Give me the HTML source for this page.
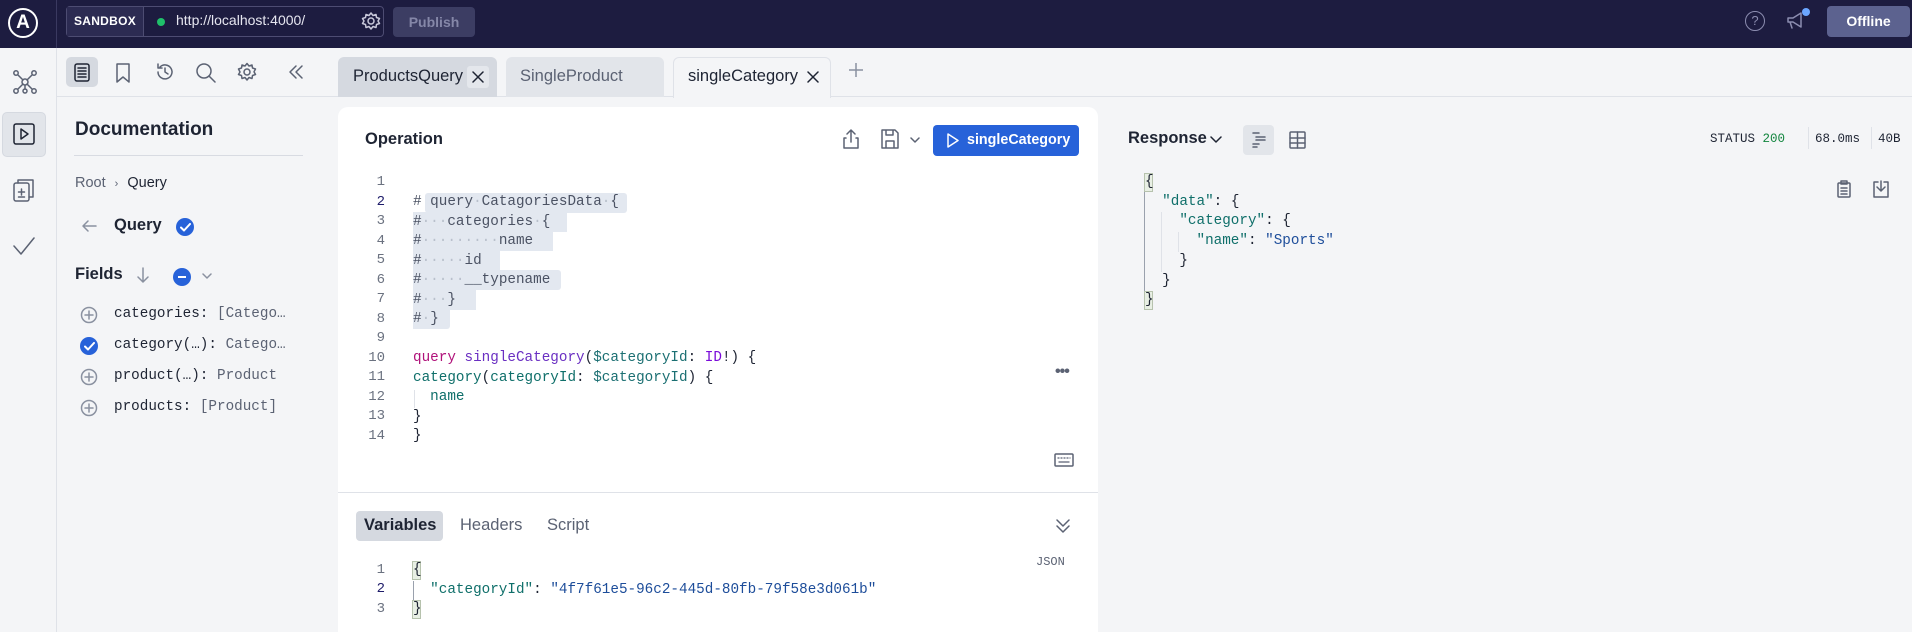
<!DOCTYPE html>
<html><head><meta charset="utf-8"><style>
*{box-sizing:border-box;margin:0;padding:0}
body{width:1912px;height:632px;overflow:hidden;background:#f4f5f7;font-family:"Liberation Sans",sans-serif;color:#1e2433;position:relative}
.a{position:absolute}
.mono{font-family:"Liberation Mono",monospace;font-size:14.3px;white-space:pre}
.ln{position:absolute;width:30px;text-align:right;color:#6b7280;font-family:"Liberation Mono",monospace;font-size:14px}
svg{position:absolute;fill:none;stroke:#5b6273;stroke-width:1.5;stroke-linecap:round;stroke-linejoin:round}
.hl{position:absolute;background:#e3e8f0;height:20px}
</style></head><body>
<!-- top bar -->
<div class="a" style="left:0;top:0;width:1912px;height:48px;background:#1d1c40"></div>
<div class="a" style="left:56px;top:0;width:1px;height:48px;background:#3a3960"></div>
<div class="a" style="left:8px;top:8px;width:30px;height:30px;border:2px solid #fff;border-radius:50%;color:#fff;font-weight:bold;font-size:19px;text-align:center;line-height:26px">A</div>
<div class="a" style="left:66px;top:6px;width:318px;height:31px;border:1px solid #4d4c72;border-radius:4px;background:#1d1c40"></div>
<div class="a" style="left:67px;top:7px;width:77px;height:29px;background:#2c2b52;border-right:1px solid #4d4c72;color:#fff;font-size:12px;font-weight:bold;line-height:29px;text-align:center;letter-spacing:.3px">SANDBOX</div>
<div class="a" style="left:157px;top:18px;width:8px;height:8px;border-radius:50%;background:#1fc06a"></div>
<div class="a" style="left:176px;top:12px;color:#e6e6f0;font-size:14px">http://localhost:4000/</div>
<svg style="left:361px;top:11px" width="20" height="20" viewBox="0 0 20 20"><circle cx="10" cy="10" r="3" stroke="#c8c8da"/><path d="M10 2l2 2.5 3-1 .5 3 3 1-1.5 2.5 1.5 2.5-3 1-.5 3-3-1L10 18l-2-2.5-3 1-.5-3-3-1L3 10 1.5 7.5l3-1 .5-3 3 1z" stroke="#c8c8da"/></svg>
<div class="a" style="left:393px;top:7px;width:82px;height:30px;background:#3c3d63;border-radius:4px;color:#8587a8;font-size:14px;font-weight:bold;text-align:center;line-height:30px">Publish</div>
<div class="a" style="left:1745px;top:11px;width:20px;height:20px;border:1.5px solid #8c8db0;border-radius:50%;color:#8c8db0;font-size:13px;text-align:center;line-height:18px">?</div>
<svg style="left:1785px;top:10px" width="24" height="22" viewBox="0 0 24 22"><path d="M3 8h5l8-5v14l-8-5H3zM5 12l2 6" stroke="#8c8db0"/></svg>
<div class="a" style="left:1802px;top:8px;width:8px;height:8px;border-radius:50%;background:#6ba6ff"></div>
<div class="a" style="left:1827px;top:6px;width:83px;height:31px;background:#5c628f;border-radius:4px;color:#fff;font-size:14px;font-weight:bold;text-align:center;line-height:31px">Offline</div>

<!-- left rail -->
<div class="a" style="left:56px;top:48px;width:1px;height:584px;background:#dfe2e8"></div>
<svg style="left:12px;top:69px" width="26" height="26" viewBox="0 0 26 26"><circle cx="13" cy="13" r="3"/><circle cx="4" cy="4" r="2.2"/><circle cx="22" cy="4" r="2.2"/><circle cx="4" cy="22" r="2.2"/><circle cx="22" cy="22" r="2.2"/><circle cx="13" cy="22" r="2"/><path d="M6 6l5 5M20 6l-5 5M6 20l5-5M20 20l-5-5M13 16v4"/></svg>
<div class="a" style="left:2px;top:112px;width:44px;height:45px;background:#e2e5ea;border-radius:5px;border:1px solid #d5d9e0"></div>
<svg style="left:13px;top:123px" width="22" height="22" viewBox="0 0 22 22"><rect x="1" y="1" width="20" height="20" rx="2" stroke="#1e2433"/><path d="M8 6l7 5-7 5z" stroke="#1e2433"/></svg>
<svg style="left:13px;top:178px" width="22" height="24" viewBox="0 0 22 24"><rect x="1" y="5" width="15" height="18" rx="2"/><path d="M5 5V2h15v17h-4M8.5 11v6M5.5 14h6M5.5 19h6"/></svg>
<svg style="left:12px;top:236px" width="24" height="20" viewBox="0 0 24 20"><path d="M2 10l7 8L22 2"/></svg>

<!-- doc sidebar -->
<div class="a" style="left:57px;top:96px;width:281px;height:1px;background:#dfe2e8"></div>
<div class="a" style="left:66px;top:57px;width:32px;height:30px;background:#d5d9e0;border-radius:5px"></div>
<svg style="left:73px;top:63px" width="18" height="19" viewBox="0 0 18 19"><rect x="2" y="1" width="14" height="17" rx="2" stroke="#1e2433"/><path d="M5 5h8M5 8h8M5 11h8M5 14h8" stroke="#1e2433"/></svg>
<svg style="left:115px;top:63px" width="16" height="20" viewBox="0 0 16 20"><path d="M2 1h12v18l-6-5-6 5z"/></svg>
<svg style="left:155px;top:62px" width="20" height="20" viewBox="0 0 20 20"><path d="M3 10a7 7 0 1 0 2-5M3 2v4h4M10 6v4l3 2"/></svg>
<svg style="left:195px;top:62px" width="21" height="21" viewBox="0 0 21 21"><circle cx="9" cy="9" r="7"/><path d="M14 14l6 6"/></svg>
<svg style="left:237px;top:62px" width="20" height="20" viewBox="0 0 20 20"><circle cx="10" cy="10" r="3"/><path d="M10 1.5l2 2.5 3-1 .5 3 3 1-1.5 2.8 1.5 2.7-3 1-.5 3-3-1-2 2.5-2-2.5-3 1-.5-3-3-1L3 10 1.5 7l3-1 .5-3 3 1z"/></svg>
<svg style="left:288px;top:64px" width="16" height="16" viewBox="0 0 16 16"><path d="M8 2L2 8l6 6M14 2L8 8l6 6"/></svg>

<div class="a" style="left:75px;top:119px;font-size:19px;font-weight:bold">Documentation</div>
<div class="a" style="left:74px;top:155px;width:229px;height:1px;background:#d8dbe2"></div>
<div class="a" style="left:75px;top:175px;font-size:14.5px;color:#5b6273">Root <span style="font-size:11px;margin:0 5px">›</span> <span style="color:#1e2433">Query</span></div>
<svg style="left:81px;top:218px" width="16" height="16" viewBox="0 0 16 16"><path d="M15 8H2M7 3L2 8l5 5" stroke="#8a91a0"/></svg>
<div class="a" style="left:114px;top:216px;font-size:16.5px;font-weight:bold">Query</div>
<div class="a" style="left:176px;top:218px;width:18px;height:18px;border-radius:50%;background:#2762d9"></div>
<svg style="left:180px;top:223px" width="11" height="9" viewBox="0 0 11 9"><path d="M1 4.5l3 3L10 1" stroke="#fff" stroke-width="2"/></svg>
<div class="a" style="left:75px;top:265px;font-size:16.5px;font-weight:bold">Fields</div>
<svg style="left:136px;top:267px" width="14" height="16" viewBox="0 0 14 16"><path d="M7 1v14M2 10l5 5 5-5" stroke="#8a91a0"/></svg>
<div class="a" style="left:173px;top:268px;width:18px;height:18px;border-radius:50%;background:#2762d9"></div>
<div class="a" style="left:178px;top:276px;width:8px;height:2px;background:#fff"></div>
<svg style="left:202px;top:273px" width="10" height="7" viewBox="0 0 10 7"><path d="M1 1l4 4 4-4" stroke="#8a91a0"/></svg>

<svg style="left:80px;top:306px" width="18" height="18" viewBox="0 0 18 18"><circle cx="9" cy="9" r="7.5" stroke="#8a91a0"/><path d="M9 5v8M5 9h8" stroke="#8a91a0"/></svg>
<div class="a mono" style="left:114px;top:306px;font-size:14.3px">categories<span>:</span> <span style="color:#5b6273">[Catego…</span></div>
<div class="a" style="left:80px;top:337px;width:18px;height:18px;border-radius:50%;background:#2762d9"></div>
<svg style="left:84px;top:342px" width="11" height="9" viewBox="0 0 11 9"><path d="M1 4.5l3 3L10 1" stroke="#fff" stroke-width="2"/></svg>
<div class="a mono" style="left:114px;top:337px">category(…)<span>:</span> <span style="color:#5b6273">Catego…</span></div>
<svg style="left:80px;top:368px" width="18" height="18" viewBox="0 0 18 18"><circle cx="9" cy="9" r="7.5" stroke="#8a91a0"/><path d="M9 5v8M5 9h8" stroke="#8a91a0"/></svg>
<div class="a mono" style="left:114px;top:368px">product(…)<span>:</span> <span style="color:#5b6273">Product</span></div>
<svg style="left:80px;top:399px" width="18" height="18" viewBox="0 0 18 18"><circle cx="9" cy="9" r="7.5" stroke="#8a91a0"/><path d="M9 5v8M5 9h8" stroke="#8a91a0"/></svg>
<div class="a mono" style="left:114px;top:399px">products<span>:</span> <span style="color:#5b6273">[Product]</span></div>

<!-- tabs -->
<div class="a" style="left:338px;top:96px;width:1574px;height:1px;background:#dfe2e8"></div>
<div class="a" style="left:338px;top:57px;width:159px;height:40px;background:#d5d9e0;border-radius:6px 6px 0 0"></div>
<div class="a" style="left:353px;top:67px;font-size:16.5px;color:#1e2433">ProductsQuery</div>
<div class="a" style="left:467px;top:66px;width:22px;height:22px;background:#e4e7ec;border-radius:3px"></div>
<svg style="left:472px;top:71px" width="12" height="12" viewBox="0 0 12 12"><path d="M1 1l10 10M11 1L1 11" stroke="#1e2433"/></svg>
<div class="a" style="left:506px;top:57px;width:158px;height:40px;background:#e2e5ea;border-radius:6px 6px 0 0"></div>
<div class="a" style="left:520px;top:67px;font-size:16.5px;color:#5b6273">SingleProduct</div>
<div class="a" style="left:673px;top:57px;width:158px;height:41px;background:#f4f5f7;border:1px solid #dfe2e8;border-bottom:none;border-radius:6px 6px 0 0"></div>
<div class="a" style="left:688px;top:67px;font-size:16.5px;color:#1e2433">singleCategory</div>
<svg style="left:807px;top:71px" width="12" height="12" viewBox="0 0 12 12"><path d="M1 1l10 10M11 1L1 11" stroke="#1e2433"/></svg>
<svg style="left:849px;top:63px" width="14" height="14" viewBox="0 0 14 14"><path d="M7 0v14M0 7h14" stroke="#8a91a0"/></svg>

<!-- operation panel -->
<div class="a" style="left:338px;top:107px;width:760px;height:525px;background:#fff;border-radius:10px 10px 0 0"></div>
<div class="a" style="left:365px;top:130px;font-size:16.5px;font-weight:bold">Operation</div>
<svg style="left:843px;top:129px" width="16" height="20" viewBox="0 0 16 20"><path d="M8 13V1M4 5l4-4 4 4M3 9H1v10h14V9h-2"/></svg>
<svg style="left:881px;top:129px" width="18" height="20" viewBox="0 0 18 20"><path d="M1 1h13l3 3v15H1zM5 1v5h7V1M5 19v-7h8v7"/></svg>
<svg style="left:910px;top:137px" width="10" height="7" viewBox="0 0 10 7"><path d="M1 1l4 4 4-4"/></svg>
<div class="a" style="left:933px;top:125px;width:146px;height:31px;background:#2762d9;border-radius:4px"></div>
<svg style="left:946px;top:133px" width="14" height="15" viewBox="0 0 14 15"><path d="M2 1l10 6.5L2 14z" stroke="#fff"/></svg>
<div class="a" style="left:967px;top:132px;color:#fff;font-size:14.3px;font-weight:bold">singleCategory</div>

<div class="hl" style="left:425px;top:193px;width:202px;border-radius:3px"></div>
<div class="hl" style="left:413px;top:212px;width:154px"></div>
<div class="hl" style="left:413px;top:231px;width:140px"></div>
<div class="hl" style="left:413px;top:251px;width:87px"></div>
<div class="hl" style="left:413px;top:270px;width:148px;border-radius:0 3px 3px 0"></div>
<div class="hl" style="left:413px;top:290px;width:63px"></div>
<div class="hl" style="left:413px;top:309px;width:37px;border-radius:0 0 3px 0"></div>

<div class="ln" style="left:355px;top:174px">1</div>
<div class="ln" style="left:355px;top:194px;color:#1e1c6a">2</div>
<div class="ln" style="left:355px;top:213px">3</div>
<div class="ln" style="left:355px;top:233px">4</div>
<div class="ln" style="left:355px;top:252px">5</div>
<div class="ln" style="left:355px;top:272px">6</div>
<div class="ln" style="left:355px;top:291px">7</div>
<div class="ln" style="left:355px;top:311px">8</div>
<div class="ln" style="left:355px;top:330px">9</div>
<div class="ln" style="left:355px;top:350px">10</div>
<div class="ln" style="left:355px;top:369px">11</div>
<div class="ln" style="left:355px;top:389px">12</div>
<div class="ln" style="left:355px;top:408px">13</div>
<div class="ln" style="left:355px;top:428px">14</div>

<div class="a mono" style="left:413px;top:193px;color:#4b5263;line-height:19.5px"># query<span style="color:#b9c0cc">·</span>CatagoriesData<span style="color:#b9c0cc">·</span>{
#<span style="color:#b9c0cc">···</span>categories<span style="color:#b9c0cc">·</span>{
#<span style="color:#b9c0cc">·········</span>name
#<span style="color:#b9c0cc">·····</span>id
#<span style="color:#b9c0cc">·····</span>__typename
#<span style="color:#b9c0cc">···</span>}
#<span style="color:#b9c0cc">·</span>}
</div>
<div class="a mono" style="left:413px;top:349px;line-height:19.5px;color:#1e2433"><span style="color:#b0127a">query</span> <span style="color:#6a2fc2">singleCategory</span>(<span style="color:#1b6f72">$categoryId</span>: <span style="color:#7a0bd9">ID</span>!) {
<span style="color:#0f6f6a">category</span>(<span style="color:#0f6f6a">categoryId</span>: <span style="color:#1b6f72">$categoryId</span>) {
  <span style="color:#0f6f6a">name</span>
}
}</div>
<div class="a" style="left:414px;top:390px;width:1px;height:18px;background:#dfe2e8"></div>
<div class="a" style="left:1055px;top:363px;color:#5b6273;font-size:16px;letter-spacing:-1px;font-weight:bold">•••</div>
<svg style="left:1054px;top:453px" width="20" height="14" viewBox="0 0 20 14"><rect x="1" y="1" width="18" height="12" rx="1"/><path d="M4 5h1M7 5h1M10 5h1M13 5h1M16 5h0M5 9h10" stroke-width="1.3"/></svg>

<div class="a" style="left:338px;top:492px;width:760px;height:1px;background:#dfe2e8"></div>
<div class="a" style="left:356px;top:511px;width:87px;height:30px;background:#d5d9e0;border-radius:4px"></div>
<div class="a" style="left:364px;top:516px;font-size:16.5px;font-weight:bold">Variables</div>
<div class="a" style="left:460px;top:516px;font-size:16.5px;color:#5b6273">Headers</div>
<div class="a" style="left:547px;top:516px;font-size:16.5px;color:#5b6273">Script</div>
<svg style="left:1056px;top:518px" width="14" height="16" viewBox="0 0 14 16"><path d="M1 2l6 6 6-6M1 8l6 6 6-6"/></svg>
<div class="a" style="left:1036px;top:555px;font-family:'Liberation Mono',monospace;font-size:12px;color:#5b6273">JSON</div>
<div class="ln" style="left:355px;top:562px">1</div>
<div class="ln" style="left:355px;top:581px;color:#1e1c6a">2</div>
<div class="ln" style="left:355px;top:601px">3</div>
<div class="a" style="left:412px;top:561px;width:9px;height:19px;background:#e8efe4;border:1px solid #b6c2ad"></div>
<div class="a" style="left:412px;top:600px;width:9px;height:19px;background:#e8efe4;border:1px solid #b6c2ad"></div>
<div class="a" style="left:413px;top:581px;width:1px;height:19px;background:#9aa1ad"></div>
<div class="a mono" style="left:413px;top:561px;line-height:19.5px;color:#1e2433">{
  <span style="color:#0f6f6a">"categoryId"</span>: <span style="color:#1d4d9a">"4f7f61e5-96c2-445d-80fb-79f58e3d061b"</span>
}</div>

<!-- response -->
<div class="a" style="left:1128px;top:129px;font-size:16.5px;font-weight:bold">Response</div>
<svg style="left:1210px;top:136px" width="12" height="8" viewBox="0 0 12 8"><path d="M1 1l5 5 5-5" stroke="#1e2433"/></svg>
<div class="a" style="left:1243px;top:125px;width:31px;height:30px;background:#e2e5ea;border-radius:4px"></div>
<svg style="left:1251px;top:131px" width="16" height="17" viewBox="0 0 16 17"><path d="M2 2h6M5 6h9M5 9h9M2 13h6M2 16h4"/></svg>
<svg style="left:1289px;top:131px" width="17" height="18" viewBox="0 0 17 18"><rect x="1" y="1" width="15" height="16" rx="1"/><path d="M1 7h15M1 12h15M8.5 1v16"/></svg>
<div class="a" style="left:1710px;top:132px;font-family:'Liberation Mono',monospace;font-size:12.5px;color:#1e2433">STATUS <span style="color:#13863f">200</span></div>
<div class="a" style="left:1808px;top:127px;width:1px;height:22px;background:#dfe2e8"></div>
<div class="a" style="left:1815px;top:132px;font-family:'Liberation Mono',monospace;font-size:12.5px">68.0ms</div>
<div class="a" style="left:1871px;top:127px;width:1px;height:22px;background:#dfe2e8"></div>
<div class="a" style="left:1878px;top:132px;font-family:'Liberation Mono',monospace;font-size:12.5px">40B</div>
<svg style="left:1837px;top:180px" width="14" height="18" viewBox="0 0 14 18"><rect x="1" y="3" width="12" height="14" rx="1"/><path d="M4 1h6v3H4zM4 8h6M4 11h6M4 14h6"/></svg>
<svg style="left:1873px;top:180px" width="16" height="18" viewBox="0 0 16 18"><path d="M5 2H1v15h14V2h-4M8 1v10M4 7l4 4 4-4"/></svg>

<div class="a" style="left:1144px;top:173px;width:9px;height:19px;background:#e8efe4;border:1px solid #b6c2ad"></div>
<div class="a" style="left:1144px;top:291px;width:9px;height:19px;background:#e8efe4;border:1px solid #b6c2ad"></div>
<div class="a" style="left:1144px;top:192px;width:1px;height:99px;background:#9aa1ad"></div>
<div class="a" style="left:1161px;top:212px;width:1px;height:60px;background:#dfe2e8"></div>
<div class="a" style="left:1178px;top:232px;width:1px;height:20px;background:#dfe2e8"></div>
<div class="a mono" style="left:1145px;top:173px;line-height:19.7px;color:#1e2433">{
  <span style="color:#0f6f6a">"data"</span>: {
    <span style="color:#0f6f6a">"category"</span>: {
      <span style="color:#0f6f6a">"name"</span>: <span style="color:#1d4d9a">"Sports"</span>
    }
  }
}</div>
</body></html>
